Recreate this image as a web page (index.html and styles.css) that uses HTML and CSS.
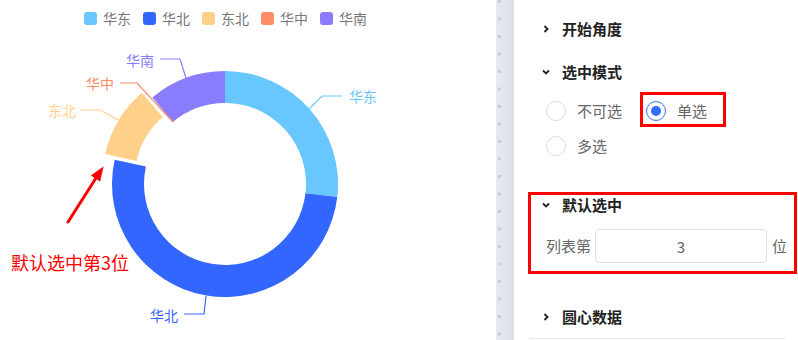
FILE: index.html
```html
<!DOCTYPE html>
<html lang="zh">
<head>
<meta charset="utf-8">
<title>饼图配置</title>
<link rel="stylesheet" href="styles.css">
</head>
<body>
<div class="page">
  <div class="chart-panel">
    <div class="legend">
      <div class="legend-item"><span class="swatch c-east"></span><span>华东</span></div>
      <div class="legend-item"><span class="swatch c-north"></span><span>华北</span></div>
      <div class="legend-item"><span class="swatch c-ne"></span><span>东北</span></div>
      <div class="legend-item"><span class="swatch c-mid"></span><span>华中</span></div>
      <div class="legend-item"><span class="swatch c-south"></span><span>华南</span></div>
    </div>
    <svg class="chart" width="496" height="304" viewBox="0 36 496 304">
      <path fill="#69c7ff" d="M225,71 A113,113 0 0 1 337.25,196.99 L305.47,193.31 A81,81 0 0 0 225,103 Z"/>
      <path fill="#3366ff" d="M337.25,196.99 A113,113 0 1 1 114.63,159.74 L145.89,166.61 A81,81 0 1 0 305.47,193.31 Z"/>
      <path fill="#ffd08a" d="M105.19,154.10 A113,113 0 0 1 141.87,92.69 L162.74,116.95 A81,81 0 0 0 136.45,160.97 Z"/>
      <path fill="#8a7cff" d="M152.36,97.44 A113,113 0 0 1 225,71 L225,103 A81,81 0 0 0 172.93,121.95 Z"/>

      <g fill="none" stroke-width="1.2">
        <polyline stroke="#69c7ff" points="309.5,108.5 322,96 342,96"/>
        <polyline stroke="#3366ff" points="206,296 204,314 184,314"/>
        <polyline stroke="#ffd08a" points="118,120 100,110 80,110"/>
        <polyline stroke="#ff8c66" points="120,83 137,83 173,122"/>
        <polyline stroke="#8a7cff" points="186,78 180,59 160,59"/>
      </g>

      <g class="label">
        <text x="349" y="96" fill="#69c7ff">华东</text>
        <text x="178" y="315" fill="#3366ff" text-anchor="end">华北</text>
        <text x="76" y="110" fill="#ffd08a" text-anchor="end">东北</text>
        <text x="114" y="83" fill="#ff8c66" text-anchor="end">华中</text>
        <text x="154" y="60" fill="#8a7cff" text-anchor="end">华南</text>
      </g>

      <g stroke="#ff0000" fill="#ff0000">
        <line x1="68" y1="222" x2="96" y2="178" stroke-width="3" stroke-linecap="round"/>
        <polygon points="103.5,166.5 90.8,175.6 100.2,181.6" stroke="none"/>
      </g>
      <text class="note" x="11" y="262">默认选中第3位</text>
    </svg>
  </div>

  <div class="divider"></div>

  <div class="panel">
    <div class="header h-first">
      <span class="chev"><svg width="10" height="10" viewBox="0 0 10 10"><polyline points="3.5,2 6.5,5 3.5,8" fill="none" stroke="#222" stroke-width="1.8"/></svg></span>
      <span class="title">开始角度</span>
    </div>

    <div class="header h-second">
      <span class="chev"><svg width="10" height="10" viewBox="0 0 10 10"><polyline points="2,3.5 5,6.5 8,3.5" fill="none" stroke="#222" stroke-width="1.8"/></svg></span>
      <span class="title">选中模式</span>
    </div>

    <div class="radio-group">
      <div class="radio-row">
        <label class="radio"><span class="circle"></span><span class="rtext">不可选</span></label>
        <label class="radio radio-marked"><span class="circle checked"></span><span class="rtext">单选</span></label>
      </div>
      <div class="radio-row">
        <label class="radio"><span class="circle"></span><span class="rtext">多选</span></label>
      </div>
    </div>

    <div class="boxed">
      <div class="header h-boxed">
        <span class="chev"><svg width="10" height="10" viewBox="0 0 10 10"><polyline points="2,3.5 5,6.5 8,3.5" fill="none" stroke="#222" stroke-width="1.8"/></svg></span>
        <span class="title">默认选中</span>
      </div>
      <div class="input-row">
        <span class="itext">列表第</span>
        <div class="input">3</div>
        <span class="itext">位</span>
      </div>
    </div>

    <div class="header h-last">
      <span class="chev"><svg width="10" height="10" viewBox="0 0 10 10"><polyline points="3.5,2 6.5,5 3.5,8" fill="none" stroke="#222" stroke-width="1.8"/></svg></span>
      <span class="title">圆心数据</span>
    </div>
    <div class="rule"></div>
  </div>
</div>
</body>
</html>
```

FILE: styles.css
```css
* { box-sizing: border-box; }
html, body {
  margin: 0;
  padding: 0;
  background: #fff;
}
body {
  font-family: "Noto Sans CJK SC", "Noto Sans", sans-serif;
  width: 798px;
  height: 340px;
  overflow: hidden;
}
.page {
  display: flex;
  width: 798px;
  height: 340px;
}
.chart-panel {
  width: 496px;
  height: 340px;
  display: flex;
  flex-direction: column;
  background: #fff;
}
.legend {
  display: flex;
  gap: 12px;
  padding-left: 84px;
  padding-top: 11px;
  height: 36px;
}
.legend-item {
  display: flex;
  align-items: center;
  gap: 6px;
  height: 14px;
  font-size: 14px;
  line-height: 14px;
  color: #777;
}
.swatch {
  width: 13px;
  height: 13px;
  border-radius: 3px;
  display: block;
}
.c-east { background: #69c7ff; }
.c-north { background: #3366ff; }
.c-ne { background: #ffd08a; }
.c-mid { background: #ff8c66; }
.c-south { background: #8a7cff; }
.chart { display: block; }
.label text {
  font-size: 14px;
  dominant-baseline: central;
}
.note {
  font-size: 18px;
  fill: #ff0000;
  dominant-baseline: central;
}

.divider {
  width: 18px;
  height: 340px;
  background:
    linear-gradient(to bottom, #c9cdd7 0 3px, transparent 3px) 2px 0 / 3px 17.5px repeat-y,
    linear-gradient(to right, #e8eaf0, #dcdfe8);
}

.panel {
  flex: 1;
  height: 340px;
  color: #222;
}
.header {
  display: flex;
  align-items: center;
  height: 20px;
  padding-left: 27px;
}
.chev {
  width: 10px;
  height: 10px;
  display: block;
  margin-right: 11px;
}
.chev svg { display: block; }
.title {
  font-size: 15px;
  font-weight: 700;
  line-height: 20px;
  color: #222;
}
.h-first { margin-top: 19px; }
.h-second { margin-top: 23px; }

.radio-group {
  margin-top: 10px;
  padding-left: 32px;
}
.radio-row {
  display: flex;
  align-items: flex-start;
}
.radio {
  display: flex;
  align-items: center;
  padding: 9px 0 6px 0;
  height: 35px;
}
.radio + .radio { margin-left: 18px; }
.radio-marked {
  border: 3px solid #ff0000;
  padding: 6px 16px 3px 3px;
}
.circle {
  width: 20px;
  height: 20px;
  border-radius: 50%;
  border: 1px solid #d9dce3;
  background: #fff;
  display: block;
  position: relative;
}
.circle.checked {
  border-color: #3370ff;
}
.circle.checked::after {
  content: "";
  position: absolute;
  left: 4px;
  top: 4px;
  width: 10px;
  height: 10px;
  border-radius: 50%;
  background: #3370ff;
}
.rtext {
  margin-left: 11px;
  font-size: 15px;
  line-height: 20px;
  color: #666;
}

.boxed {
  margin-top: 30px;
  margin-left: 14px;
  width: 269px;
  height: 82px;
  border: 3px solid #ff0000;
}
.h-boxed { padding-left: 10px; }
.input-row {
  display: flex;
  align-items: center;
  margin-top: 14px;
  padding-left: 15px;
}
.itext {
  font-size: 15px;
  color: #666;
  line-height: 20px;
}
.input {
  width: 172px;
  height: 34px;
  margin: 0 5px 0 4px;
  border: 1px solid #dcdfe6;
  border-radius: 4px;
  font-size: 15px;
  color: #666;
  display: flex;
  align-items: center;
  justify-content: center;
}
.h-last { margin-top: 33px; }
.rule {
  margin-top: 11px;
  margin-left: 15px;
  width: 257px;
  height: 1px;
  background: #e8eaf0;
}
```
